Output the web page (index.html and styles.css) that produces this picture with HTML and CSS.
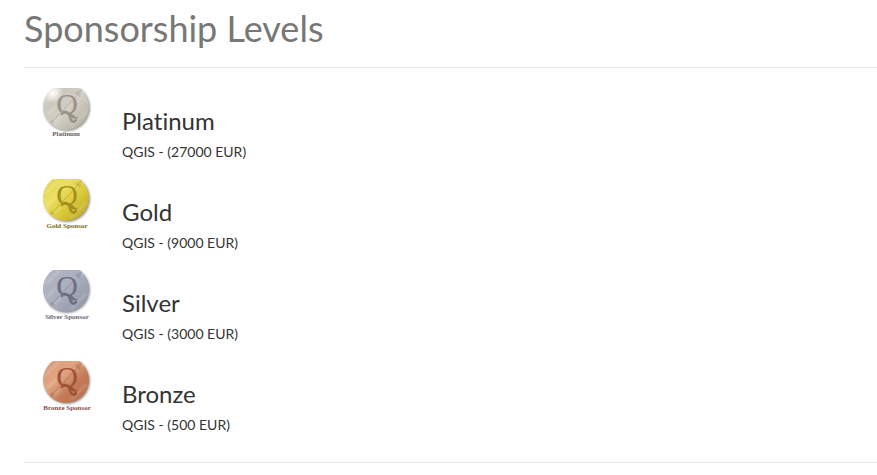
FILE: index.html
```html
<!DOCTYPE html>
<html lang="en">
<head>
<meta charset="utf-8">
<title>Sponsorship Levels</title>
<link rel="stylesheet" href="styles.css">
</head>
<body>
<svg class="defs" width="0" height="0" aria-hidden="true">
  <defs>
    <linearGradient id="platinum" x1="0" y1="0" x2="1" y2="1"><stop offset="0" stop-color="#e2e0d6"/><stop offset=".3" stop-color="#cbc8bd"/><stop offset=".55" stop-color="#d2cfc5"/><stop offset="1" stop-color="#aaa699"/></linearGradient>
    <linearGradient id="gold" x1="0" y1="0" x2="1" y2="1"><stop offset="0" stop-color="#e3d44c"/><stop offset=".35" stop-color="#eadf62"/><stop offset=".6" stop-color="#dccb3c"/><stop offset="1" stop-color="#b49d1f"/></linearGradient>
    <linearGradient id="silver" x1="0" y1="0" x2="1" y2="1"><stop offset="0" stop-color="#b4b7c4"/><stop offset=".5" stop-color="#abaebd"/><stop offset="1" stop-color="#8e91a1"/></linearGradient>
    <linearGradient id="bronze" x1="0" y1="0" x2="1" y2="1"><stop offset="0" stop-color="#d99a76"/><stop offset=".4" stop-color="#e0a482"/><stop offset=".65" stop-color="#c47a55"/><stop offset="1" stop-color="#b56d49"/></linearGradient>
    <radialGradient id="glint"><stop offset="0" stop-color="#fff"/><stop offset="1" stop-color="#fff" stop-opacity="0"/></radialGradient>
    <filter id="soft" x="-20%" y="-20%" width="140%" height="140%"><feGaussianBlur stdDeviation=".8"/></filter>
    <filter id="haze" x="-20%" y="-20%" width="140%" height="140%"><feGaussianBlur stdDeviation="1"/></filter>
    <g id="sheen" fill="none" stroke="#fff" stroke-opacity=".2" stroke-width="2" filter="url(#haze)">
      <path d="M4 14 17 1M5 27 14 18M29 39 45 23M32 8 42 3M11 35 19 28"/>
    </g>
    <g id="arrow">
      <path d="M10 34 37 5" fill="none" stroke="currentColor" stroke-opacity=".5" stroke-width="1"/>
      <path d="M40 1 38 9 32 5ZM8 36 9 31 13 35Z" fill="currentColor" fill-opacity=".3"/>
    </g>
    <path id="swash" d="M20 26C22 22 27 24 28 29C29 34 32 35 34 32" fill="none" stroke="currentColor" stroke-width="2.4" stroke-linecap="round"/>
  </defs>
</svg>
<main class="page">
  <h1 class="title">Sponsorship Levels</h1>
  <ul class="levels">
    <li class="level">
      <svg class="medal platinum" viewBox="0 0 50 50" role="img" aria-label="Platinum medal">
        <circle class="shadow" cx="25" cy="20" r="23"/><circle cx="24" cy="19" r="23" fill="url(#platinum)"/>
        <use href="#sheen"/><use href="#arrow"/>
        <text class="letter" x="25" y="26">Q</text><use href="#swash"/>
        <circle cx="11" cy="5" r="10" fill="url(#glint)"/>
        <text class="caption" x="24" y="48">Platinum</text>
      </svg>
      <div class="info"><h2 class="name">Platinum</h2><p class="price">QGIS - (27000 EUR)</p></div>
    </li>
    <li class="level">
      <svg class="medal gold" viewBox="0 0 50 50" role="img" aria-label="Gold medal">
        <circle class="shadow" cx="25" cy="20" r="23"/><circle cx="24" cy="19" r="23" fill="url(#gold)"/>
        <use href="#sheen"/><use href="#arrow"/>
        <text class="letter" x="25" y="26">Q</text><use href="#swash"/>
        <text class="caption" x="25" y="49">Gold Sponsor</text>
      </svg>
      <div class="info"><h2 class="name">Gold</h2><p class="price">QGIS - (9000 EUR)</p></div>
    </li>
    <li class="level">
      <svg class="medal silver" viewBox="0 0 50 50" role="img" aria-label="Silver medal">
        <circle class="shadow" cx="25" cy="20" r="23"/><circle cx="24" cy="19" r="23" fill="url(#silver)"/>
        <use href="#sheen"/><use href="#arrow"/>
        <text class="letter" x="25" y="26">Q</text><use href="#swash"/>
        <text class="caption" x="25" y="49">Silver Sponsor</text>
      </svg>
      <div class="info"><h2 class="name">Silver</h2><p class="price">QGIS - (3000 EUR)</p></div>
    </li>
    <li class="level">
      <svg class="medal bronze" viewBox="0 0 50 50" role="img" aria-label="Bronze medal">
        <circle class="shadow" cx="25" cy="20" r="23"/><circle cx="24" cy="19" r="23" fill="url(#bronze)"/>
        <use href="#sheen"/><use href="#arrow"/>
        <text class="letter" x="25" y="26">Q</text><use href="#swash"/>
        <text class="caption" x="25" y="49">Bronze Sponsor</text>
      </svg>
      <div class="info"><h2 class="name">Bronze</h2><p class="price">QGIS - (500 EUR)</p></div>
    </li>
  </ul>
</main>
</body>
</html>
```
FILE: styles.css
```css
* { box-sizing: border-box; }

body {
  margin: 0;
  background: #fff;
  color: #333;
  font: 14px/20px Lato, sans-serif;
  font-variant-ligatures: none;
}

.defs { position: absolute; }

.page { padding: 8px 0 0 24px; }

.title {
  margin: 0;
  padding-bottom: 19px;
  border-bottom: 1px solid #eaeaea;
  color: #777;
  font-size: 36px;
  font-weight: 400;
  line-height: 40px;
}

.levels {
  margin: 0;
  padding: 20px 0 10px;
  border-bottom: 1px solid #eaeaea;
  list-style: none;
}

.level {
  display: flex;
  gap: 30px;
  padding: 0 18px 17px;
}

.medal {
  flex: none;
  width: 50px;
  height: 50px;
  overflow: hidden;
}

.shadow { fill: #444; fill-opacity: .6; filter: url(#soft); }

.letter {
  fill: currentColor;
  font: 30px "Liberation Serif", serif;
  text-anchor: middle;
}

.caption {
  font: bold 7px "Liberation Serif", serif;
  text-anchor: middle;
}

.platinum { color: #9a9384; }
.platinum .caption { fill: #6b5d55; }
.gold { color: #a48f1c; }
.gold .caption { fill: #796b20; }
.silver { color: #6c7082; }
.silver .caption { fill: #686775; }
.bronze { color: #a05237; }
.bronze .caption { fill: #864d42; }

.info { padding-top: 20px; }

.name {
  margin: 0 0 8px;
  font-size: 24px;
  font-weight: 400;
  line-height: 26px;
}

.price { margin: 0; }
```
